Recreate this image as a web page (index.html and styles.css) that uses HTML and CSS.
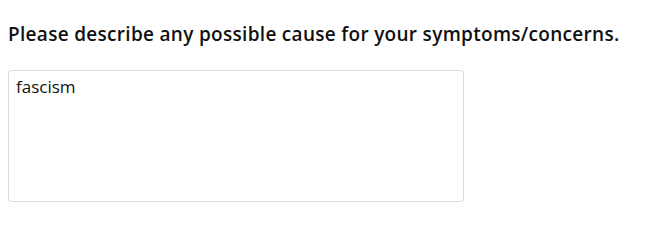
FILE: index.html
```html
<!DOCTYPE html>
<html>
<head>
    <meta charset="UTF-8">
    <title>Symptoms</title>
    <link rel="stylesheet" href="styles.css">
</head>
<body>
<div class="question">
    <h3>Please describe any possible cause for your symptoms/concerns.</h3>
    <textarea class="svar">fascism</textarea>
</div>
</body>
</html>
```

FILE: styles.css
```css
body {
    margin: 8px;
    background-color: white;
}

.question h3 {
    font-family: "Open Sans", sans-serif;
    font-weight: 600;
    font-size: 19px;
    letter-spacing: 0.3px;
    color: #111;
    margin: 0;
    padding-top: 13px;
    line-height: 26px;
}

.svar {
    display: block;
    box-sizing: border-box;
    margin-top: 23px;
    width: 456px;
    height: 132px;
    border: 1px solid #dcdcdc;
    border-radius: 3px;
    padding: 4px 7px;
    font-family: "Open Sans", sans-serif;
    font-size: 17px;
    color: #111;
    resize: none;
}
```
